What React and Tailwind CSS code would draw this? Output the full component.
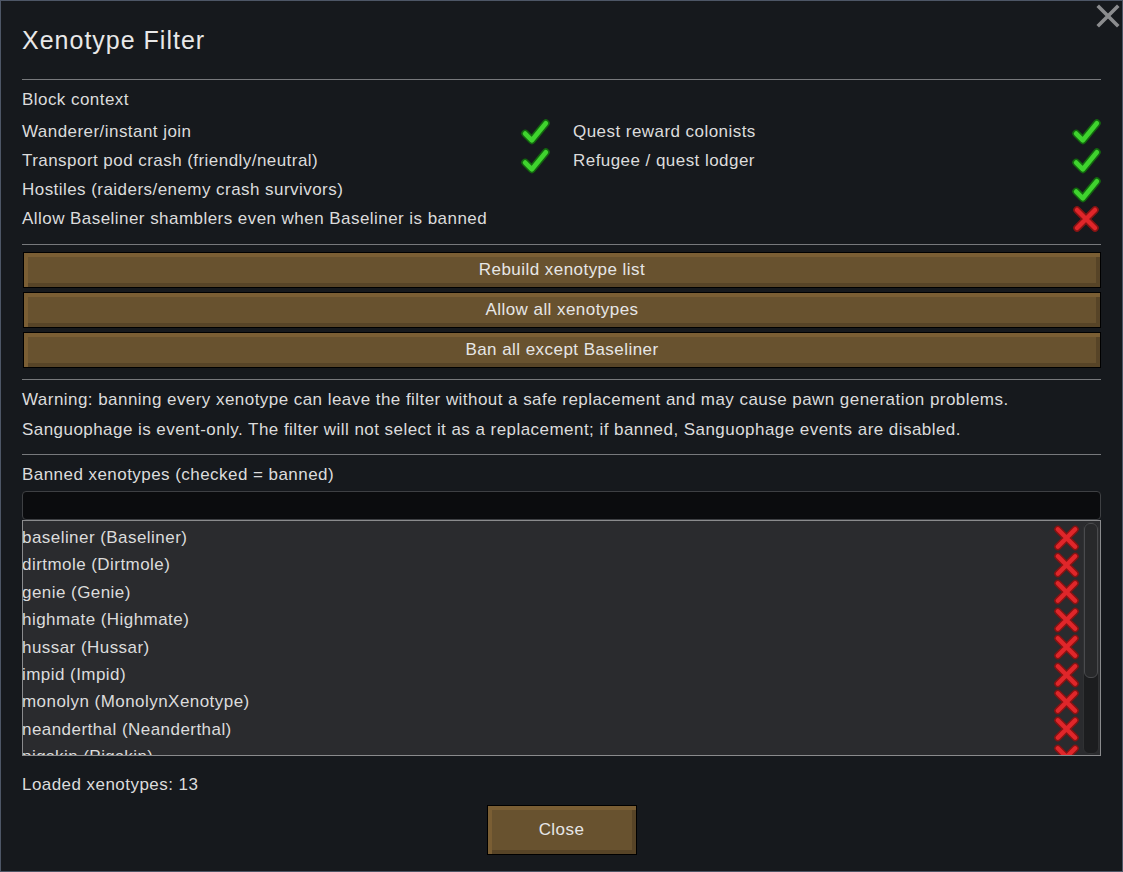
import React from 'react';

const font = { fontFamily: '"Liberation Sans", Arial, sans-serif' };

const Check = ({ className = '' }) => (
  <svg viewBox="0 0 28 26" className={className}>
    <path d="M4 15 L10.5 21.5 L24 5" fill="none" stroke="#13660f" strokeWidth="7.5" strokeLinecap="round" strokeLinejoin="round" />
    <path d="M4 15 L10.5 21.5 L24 5" fill="none" stroke="#3fd32e" strokeWidth="4.5" strokeLinecap="round" strokeLinejoin="round" />
  </svg>
);

const Cross = ({ className = '' }) => (
  <svg viewBox="0 0 28 28" className={className}>
    <path d="M5 5 L23 23 M23 5 L5 23" fill="none" stroke="#861313" strokeWidth="7.5" strokeLinecap="round" />
    <path d="M5 5 L23 23 M23 5 L5 23" fill="none" stroke="#e0262a" strokeWidth="4.5" strokeLinecap="round" />
  </svg>
);

const Sep = ({ className = '' }) => <div className={`h-px bg-[#77797c] ${className}`} />;

const WoodButton = ({ children, className = '' }) => (
  <div className={`border border-black bg-[#68522f] shadow-[inset_4px_4px_0_#7a5e34,inset_-4px_-4px_0_#574427] flex items-center justify-center text-[#e6e6e6] ${className}`}>
    {children}
  </div>
);

const xenotypes = [
  'baseliner (Baseliner)',
  'dirtmole (Dirtmole)',
  'genie (Genie)',
  'highmate (Highmate)',
  'hussar (Hussar)',
  'impid (Impid)',
  'monolyn (MonolynXenotype)',
  'neanderthal (Neanderthal)',
  'pigskin (Pigskin)',
];

export default function App() {
  return (
    <div
      className="w-[1123px] h-[872px] bg-[#16191d] border border-[#4d5666] px-[21px] text-[17px] tracking-[0.45px] text-[#dcdcdc] overflow-hidden relative"
      style={font}
    >
      {/* close glyph */}
      <svg viewBox="0 0 24 24" className="absolute right-[2px] top-[3px] w-[24px] h-[24px]">
        <path d="M3 3 L21 21 M21 3 L3 21" stroke="#8b8c8e" strokeWidth="3.6" strokeLinecap="square" />
      </svg>

      <div className="pt-[23px] h-[56px] text-[25px] tracking-[1px] leading-[32px] text-[#e8e8e8]">Xenotype Filter</div>
      <Sep className="mt-[22px]" />

      <div className="mt-[10px] h-[20px] leading-[20px]">Block context</div>

      <div className="mt-[7px] grid grid-cols-2 gap-x-[23px]">
        <div className="h-[29px] flex items-center justify-between">
          <span>Wanderer/instant join</span>
          <Check className="w-[29px] h-[27px]" />
        </div>
        <div className="h-[29px] flex items-center justify-between">
          <span>Quest reward colonists</span>
          <Check className="w-[29px] h-[27px]" />
        </div>
        <div className="h-[29px] flex items-center justify-between">
          <span>Transport pod crash (friendly/neutral)</span>
          <Check className="w-[29px] h-[27px]" />
        </div>
        <div className="h-[29px] flex items-center justify-between">
          <span>Refugee / quest lodger</span>
          <Check className="w-[29px] h-[27px]" />
        </div>
      </div>
      <div className="h-[29px] flex items-center justify-between">
        <span>Hostiles (raiders/enemy crash survivors)</span>
        <Check className="w-[29px] h-[27px]" />
      </div>
      <div className="h-[29px] flex items-center justify-between">
        <span>Allow Baseliner shamblers even when Baseliner is banned</span>
        <Cross className="w-[28px] h-[28px] mr-px" />
      </div>

      <Sep className="mt-[11px]" />

      <div className="mt-[7px] flex flex-col gap-[4px] pl-px">
        <WoodButton className="h-[36px]">Rebuild xenotype list</WoodButton>
        <WoodButton className="h-[36px]">Allow all xenotypes</WoodButton>
        <WoodButton className="h-[36px]">Ban all except Baseliner</WoodButton>
      </div>

      <Sep className="mt-[11px]" />

      <div className="mt-[5px] flex flex-col">
        <div className="h-[30px] leading-[30px] whitespace-nowrap">
          Warning: banning every xenotype can leave the filter without a safe replacement and may cause pawn generation problems.
        </div>
        <div className="h-[30px] leading-[30px] whitespace-nowrap">
          Sanguophage is event-only. The filter will not select it as a replacement; if banned, Sanguophage events are disabled.
        </div>
      </div>

      <Sep className="mt-[9px]" />

      <div className="mt-[10px] h-[20px] leading-[20px]">Banned xenotypes (checked = banned)</div>

      <div className="mt-[6px] h-[29px] rounded-[4px] border border-[#3e4043] bg-[#0b0c0e]" />

      <div className="h-[236px] border border-[#8a8b8d] bg-[#2a2b2e] flex overflow-hidden">
        <div className="flex-1 pt-[3px] relative">
          {xenotypes.map((x) => (
            <div key={x} className="h-[27.4px] flex items-center justify-between whitespace-nowrap">
              <span className="-ml-px">{x}</span>
              <Cross className="w-[27px] h-[28px] mr-[3px] shrink-0" />
            </div>
          ))}
        </div>
        <div className="w-[17px] py-px pr-px flex flex-col">
          <div className="flex-1 rounded-[6px] bg-[#1c1d1f] border border-[#303133] flex flex-col">
            <div className="h-[155px] rounded-[6px] bg-[#28292b] border border-[#4a4b4e]" />
          </div>
        </div>
      </div>

      <div className="mt-[19px] h-[20px] leading-[20px]">Loaded xenotypes: 13</div>

      <div className="mt-[10px] flex justify-center">
        <WoodButton className="w-[150px] h-[50px]">Close</WoodButton>
      </div>
    </div>
  );
}
